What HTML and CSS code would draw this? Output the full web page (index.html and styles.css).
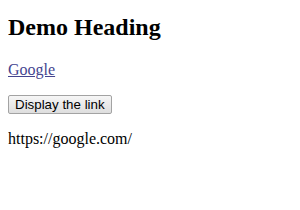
FILE: index.html
```html
<!DOCTYPE html>
<html lang="en">
<head>
    <meta charset="UTF-8">
    <title>Demo</title>
    <link rel="stylesheet" href="styles.css">
</head>
<body>
    <h2>Demo Heading</h2>
    <p><a href="https://google.com/" id="link">Google</a></p>
    <button class="show-btn">Display the link</button>
    <p id="output">https://google.com/</p>
</body>
</html>
```

FILE: styles.css
```css
body {
    margin: 14px 8px 8px;
    font-family: "Liberation Serif", "Times New Roman", serif;
    font-size: 16px;
    color: #000;
    background: #fff;
}
h2 {
    font-size: 24px;
    margin: 0 0 20px;
}
a {
    color: #44448f;
}
.show-btn {
    font-family: "Liberation Sans", Arial, sans-serif;
    font-size: 13.33px;
    padding: 1px 6px;
    border: 1px solid #a3a3a3;
    border-radius: 2px;
    background: linear-gradient(#f6f6f6, #dedede);
    color: #000;
}
```
